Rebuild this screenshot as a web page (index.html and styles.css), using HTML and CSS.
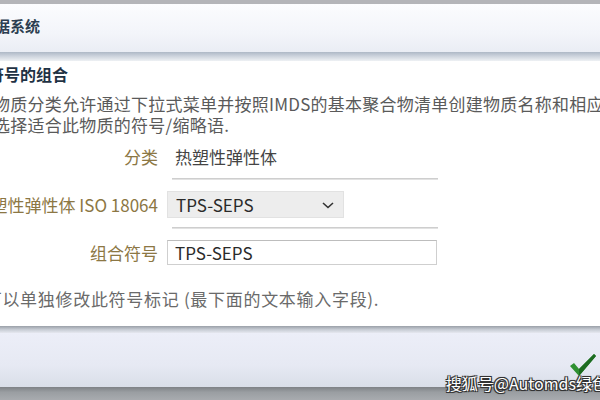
FILE: index.html
```html
<!DOCTYPE html>
<html lang="zh-CN">
<head>
  <meta charset="UTF-8" />
  <title>符号的组合</title>
  <link rel="stylesheet" href="styles.css">
</head>
<body>
  <div class="window">
    <!-- Title bar -->
    <div class="top-edge"></div>
    <div class="title-bar"><h1>数据系统</h1></div>
    <div class="title-shadow"></div>

    <!-- Content -->
    <div class="content">
      <h2>符号的组合</h2>
      <p class="desc">物质分类允许通过下拉式菜单并按照IMDS的基本聚合物清单创建物质名称和相应<br>选择适合此物质的符号/缩略语.</p>

      <div class="form">
        <div class="row">
          <span class="label">分类</span>
          <span class="value">热塑性弹性体</span>
        </div>
        <div class="rule"></div>
        <div class="row">
          <span class="label">热塑性弹性体 ISO 18064</span>
          <div class="select">
            <span>TPS-SEPS</span>
            <svg width="14" height="10" viewBox="0 0 14 10"><path d="M2 3 L7 7.5 L12 3" fill="none" stroke="#333" stroke-width="1.6"/></svg>
          </div>
        </div>
        <div class="rule"></div>
        <div class="row">
          <span class="label">组合符号</span>
          <div class="input">TPS-SEPS</div>
        </div>
      </div>

      <p class="note">您可以单独修改此符号标记 (最下面的文本输入字段).</p>
    </div>

    <!-- Bottom bar -->
    <div class="bottom-shadow"></div>
    <div class="bottom-bar">
      <svg class="check" width="28" height="24" viewBox="0 0 28 24"><path d="M1 13 L5 10 L10 16 L25 1 L27 3 L10 23 Z" fill="#2f9031"/><path d="M10 16 L25 1 L27 3 L10 23 Z" fill="#1d6b21"/></svg>
      <span class="watermark">搜狐号@Automds绿色</span>
    </div>
    <div class="bottom-edge"></div>
  </div>
</body>
</html>
```

FILE: styles.css
```css
html, body {
  margin: 0;
  padding: 0;
  width: 600px;
  height: 400px;
  overflow: hidden;
  background: #fff;
  font-family: "Noto Sans CJK SC", "DejaVu Sans", sans-serif;
}

.window {
  display: flex;
  flex-direction: column;
  height: 400px;
}

.top-edge {
  height: 4px;
  background: #b3b4b8;
}

.title-bar {
  height: 48px;
  box-sizing: border-box;
  padding-bottom: 6px;
  background: linear-gradient(180deg, #fbfcfe 0%, #f3f5fa 60%, #eaedf4 100%);
  display: flex;
  align-items: center;
  overflow: hidden;
}

.title-bar h1 {
  margin: 0 0 0 -20px;
  font-size: 15px;
  font-weight: bold;
  color: #2b3d50;
  white-space: nowrap;
}

.title-shadow {
  height: 9px;
  background: linear-gradient(180deg, #aeb8c6 0%, #c9d0da 40%, #eef1f4 100%);
}

.content {
  flex: 1;
  background: #fff;
  overflow: hidden;
}

.content h2 {
  margin: 1px 0 0 -12px;
  font-size: 16px;
  font-weight: bold;
  color: #1f3244;
  white-space: nowrap;
  line-height: 24px;
}

.desc {
  margin: 7px 0 0 -7px;
  font-size: 17px;
  line-height: 21px;
  letter-spacing: 0.25px;
  color: #5a5a5a;
  white-space: nowrap;
}

.form {
  margin-top: 9px;
  display: flex;
  flex-direction: column;
}

.row {
  display: flex;
  align-items: center;
  gap: 9px;
}

.label {
  width: 158px;
  flex: none;
  text-align: right;
  font-size: 17px;
  color: #8c7744;
  white-space: nowrap;
  direction: rtl;
  overflow: hidden;
}

.value {
  margin-left: 8px;
  font-size: 17px;
  color: #444;
  line-height: 24px;
}

.rule {
  margin: 9px 0 11px 172px;
  width: 266px;
  height: 2px;
  background: linear-gradient(180deg, #c4c4c4, #ececec);
}

.select {
  width: 177px;
  height: 27px;
  box-sizing: border-box;
  padding: 0 8px;
  background: #ededed;
  border: 1px solid #e2e2e2;
  display: flex;
  align-items: center;
  justify-content: space-between;
  font-size: 17px;
  color: #2a2a2a;
}

.input {
  width: 270px;
  height: 25px;
  box-sizing: border-box;
  padding: 0 7px;
  border: 1px solid #cfcfcf;
  border-top-color: #bdbdbd;
  display: flex;
  align-items: center;
  font-size: 17px;
  color: #2a2a2a;
}

.note {
  margin: 22px 0 0 -33px;
  font-size: 17px;
  line-height: 24px;
  letter-spacing: 0.7px;
  color: #6a6a6a;
  white-space: nowrap;
}

.bottom-shadow {
  height: 7px;
  background: linear-gradient(180deg, #9aa0a8 0%, #c6cbd3 50%, #e6e8f0 100%);
}

.bottom-bar {
  position: relative;
  height: 54px;
  background: linear-gradient(180deg, #eceef8 0%, #e6e9f3 60%, #d9dee8 100%);
}

.check {
  position: absolute;
  right: 3px;
  top: 20px;
}

.watermark {
  position: absolute;
  right: -8px;
  bottom: -8px;
  font-size: 16px;
  color: #fff;
  white-space: nowrap;
  text-shadow: -1px -1px 0 #333, 1px -1px 0 #333, -1px 1px 0 #333, 1px 1px 0 #333, 0 0 2px #000;
  z-index: 2;
}

.bottom-edge {
  height: 13px;
  background: linear-gradient(180deg, #7e8286 0%, #9a9ea2 40%, #a8abaf 100%);
}
```
